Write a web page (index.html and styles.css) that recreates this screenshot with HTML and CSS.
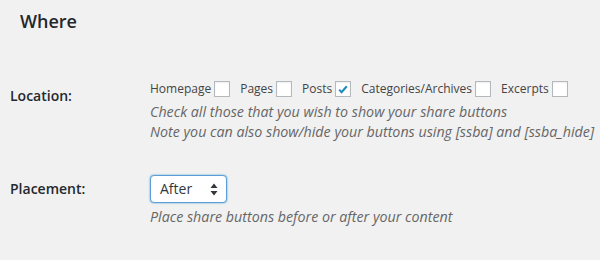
FILE: index.html
```html
<!doctype html>
<html>
<head>
  <title>Share buttons - Where</title>
  <link rel="stylesheet" href="styles.css">
</head>
<body>
  <div class="wrap">
    <h2 class="section-title">Where</h2>

    <div class="form-row location-row">
      <div class="row-label">Location:</div>
      <div class="row-field">
        <div class="check-list">
          <label class="check-item">Homepage <span class="checkbox"></span></label>
          <label class="check-item">Pages <span class="checkbox"></span></label>
          <label class="check-item">Posts <span class="checkbox checked">
            <svg width="14" height="14" viewBox="0 0 14 14"><path d="M3.2 7.6l2.4 2.6L10.8 4.2" fill="none" stroke="#1e8cbe" stroke-width="2.1"/></svg>
          </span></label>
          <label class="check-item">Categories/Archives <span class="checkbox"></span></label>
          <label class="check-item">Excerpts <span class="checkbox"></span></label>
        </div>
        <p class="description">Check all those that you wish to show your share buttons<br>Note you can also show/hide your buttons using [ssba] and [ssba_hide]</p>
      </div>
    </div>

    <div class="form-row placement-row">
      <div class="row-label">Placement:</div>
      <div class="row-field">
        <div class="select-box">
          <span>After</span>
          <svg width="8" height="13" viewBox="0 0 8 13"><path d="M4 0.5L7.5 5H0.5z M4 12.5L0.5 8h7z" fill="#32373c"/></svg>
        </div>
        <p class="description">Place share buttons before or after your content</p>
      </div>
    </div>
  </div>
</body>
</html>
```

FILE: styles.css
```css
html, body {
  margin: 0;
  padding: 0;
}
body {
  background: #f1f1f1;
  color: #23282d;
  font: 400 13px/20px "Open Sans", "Liberation Sans", sans-serif;
  width: 600px;
  height: 260px;
  overflow: hidden;
}
body * {
  box-sizing: border-box;
}
.wrap {
  padding: 9px 0 0;
}
.section-title {
  margin: 0;
  padding: 0 20px;
  font-size: 18px;
  font-weight: 600;
  line-height: 24px;
  color: #23282d;
}
.form-row {
  display: grid;
  grid-template-columns: 140px 1fr;
  padding-left: 10px;
}
.location-row {
  margin-top: 46px;
}
.placement-row {
  margin-top: 33px;
}
.row-label {
  font-size: 14px;
  font-weight: 600;
  line-height: 20px;
  color: #23282d;
}
.location-row .row-label {
  padding-top: 7px;
}
.placement-row .row-label {
  padding-top: 4px;
}
.check-list {
  display: flex;
  align-items: center;
  height: 20px;
  margin-bottom: 3px;
  font-size: 12px;
  color: #444;
}
.check-item {
  display: flex;
  align-items: center;
  margin-right: 10px;
  white-space: nowrap;
}
.checkbox {
  display: flex;
  align-items: center;
  justify-content: center;
  width: 16px;
  height: 16px;
  margin-left: 3px;
  background: #fff;
  border: 1px solid #b4b9be;
  box-shadow: inset 0 1px 2px rgba(0,0,0,.07);
}
.checkbox svg {
  display: block;
}
.description {
  margin: 0;
  font-size: 14.25px;
  font-style: italic;
  color: #666;
}
.select-box {
  display: flex;
  align-items: center;
  justify-content: space-between;
  width: 77px;
  height: 28px;
  padding: 0 8px 0 9px;
  background: #fff;
  border: 1px solid #5b9dd9;
  border-radius: 4px;
  box-shadow: 0 0 2px rgba(30,140,190,.8);
  font-size: 14px;
  color: #32373c;
  margin-bottom: 4px;
}
```
